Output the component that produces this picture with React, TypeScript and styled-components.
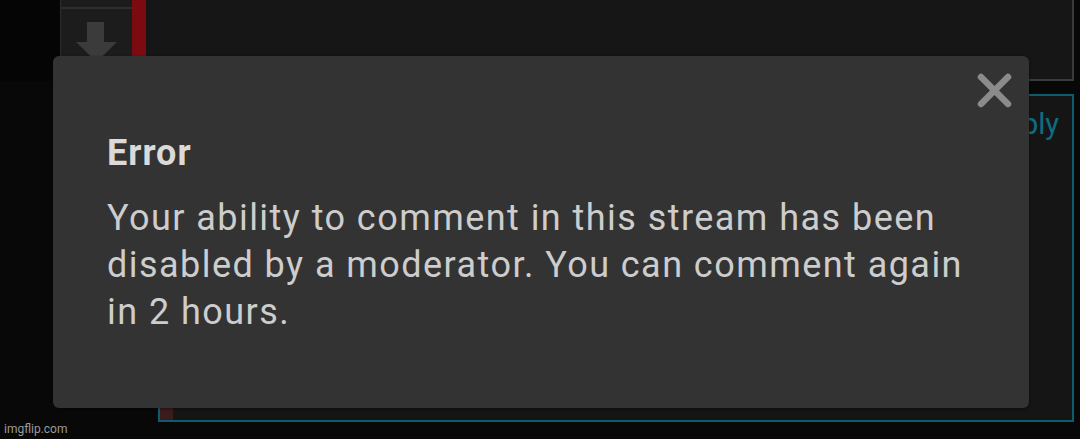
import React from 'react';
import styled, { createGlobalStyle } from 'styled-components';

const GlobalStyle = createGlobalStyle`
  html, body {
    margin: 0;
    padding: 0;
    background: #080808;
  }
  body {
    font-family: Roboto, "Noto Sans", "Liberation Sans", sans-serif;
  }
`;

const Page = styled.div`
  position: relative;
  width: 1080px;
  height: 439px;
  overflow: hidden;
  background: #080808;
`;

const TopRow = styled.div`
  display: flex;
  height: 81px;
  margin-right: 6px;
`;

const Gutter = styled.div`
  width: 60px;
  background: #050505;
`;

const VoteColumn = styled.div`
  width: 72px;
  background: #1c1c1c;
  border-left: 1px solid #2c2c2c;
  box-sizing: border-box;
  display: flex;
  flex-direction: column;
  align-items: center;
`;

const VoteDivider = styled.div`
  width: 100%;
  height: 2px;
  margin-top: 7px;
  background: #2e2e2e;
`;

const VoteIcon = styled.svg`
  margin-top: 13px;
  display: block;
`;

const RedBar = styled.div<{ $dim?: boolean }>`
  width: ${(p) => (p.$dim ? '13px' : '14px')};
  background: ${(p) => (p.$dim ? '#3c1b1d' : '#7b0b10')};
  flex-shrink: 0;
`;

const TopPanel = styled.div`
  flex: 1;
  background: #161616;
  border-right: 2px solid #3a3a3a;
  border-bottom: 2px solid #3a3a3a;
`;

const ReplyBox = styled.div`
  display: flex;
  margin: 13px 6px 0 158px;
  height: 328px;
  box-sizing: border-box;
  border: 2px solid #0f5c70;
  background: #151515;
`;

const ReplyBody = styled.div`
  flex: 1;
  display: flex;
  justify-content: flex-end;
  align-items: flex-start;
  padding: 10px 13px 0 0;
`;

const ReplyText = styled.span`
  font-size: 29px;
  line-height: 36px;
  color: #0e6c83;
`;

const Dialog = styled.div`
  position: absolute;
  left: 53px;
  top: 56px;
  width: 976px;
  height: 352px;
  box-sizing: border-box;
  padding: 77px 54px 0;
  background: #333333;
  border-radius: 6px;
  box-shadow: 0 1px 3px rgba(0, 0, 0, 0.4);
`;

const CloseButton = styled.button`
  position: absolute;
  top: 17px;
  right: 17px;
  width: 35px;
  height: 35px;
  padding: 0;
  border: none;
  background: transparent;
  display: flex;
  align-items: center;
  justify-content: center;
`;

const Title = styled.h2`
  margin: 0;
  font-size: 36px;
  line-height: 40px;
  font-weight: 700;
  letter-spacing: 1px;
  color: #dadada;
`;

const Message = styled.p`
  margin: 22px 0 0;
  font-size: 36px;
  line-height: 47px;
  letter-spacing: 1.45px;
  color: #cdcdcd;
  white-space: nowrap;
`;

const Watermark = styled.div`
  position: absolute;
  left: 4px;
  bottom: 3px;
  font-size: 12px;
  color: #9a9a9a;
`;

const App = () => {
  return (
    <>
      <GlobalStyle />
      <Page>
        <TopRow>
          <Gutter />
          <VoteColumn>
            <VoteDivider />
            <VoteIcon width="42" height="40" viewBox="0 0 42 40">
              <path d="M11 0 H28 V20 H41 L20.5 40 L0 20 H11 Z" fill="#3b3b3b" />
            </VoteIcon>
          </VoteColumn>
          <RedBar />
          <TopPanel />
        </TopRow>
        <ReplyBox>
          <RedBar $dim />
          <ReplyBody>
            <ReplyText>Reply</ReplyText>
          </ReplyBody>
        </ReplyBox>

        <Dialog>
          <CloseButton aria-label="close">
            <svg width="35" height="35" viewBox="0 0 35 35">
              <path
                d="M4 4 L31 31 M31 4 L4 31"
                stroke="#8b8b8b"
                strokeWidth="6.5"
                strokeLinecap="round"
              />
            </svg>
          </CloseButton>
          <Title>Error</Title>
          <Message>
            Your ability to comment in this stream has been
            <br />
            disabled by a moderator. You can comment again
            <br />
            in 2 hours.
          </Message>
        </Dialog>
        <Watermark>imgflip.com</Watermark>
      </Page>
    </>
  );
};

export default App;
